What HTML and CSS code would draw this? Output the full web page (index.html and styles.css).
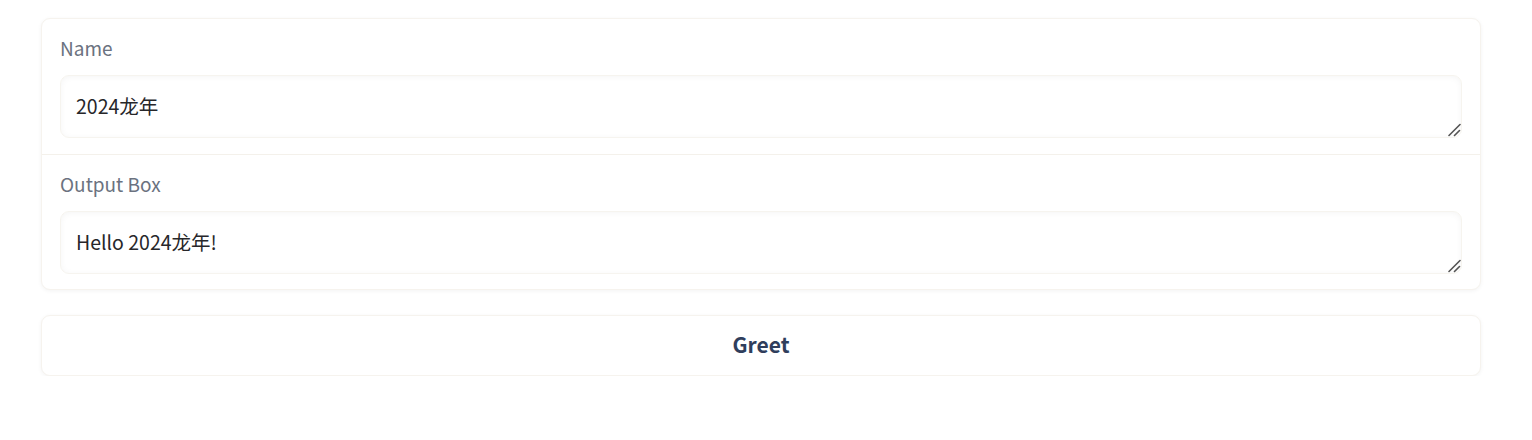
FILE: index.html
```html
<!DOCTYPE html>
<html lang="zh">
<head>
<meta charset="utf-8">
<title>Greet</title>
<link rel="stylesheet" href="styles.css">
</head>
<body>
<main class="page">
  <section class="card">
    <div class="block">
      <label class="label" for="name">Name</label>
      <textarea id="name" class="field" rows="1">2024龙年</textarea>
    </div>
    <div class="block">
      <label class="label" for="out">Output Box</label>
      <textarea id="out" class="field" rows="1">Hello 2024龙年!</textarea>
    </div>
  </section>
  <button class="btn" type="button">Greet</button>
</main>
</body>
</html>
```

FILE: styles.css
```css
* { box-sizing: border-box; }
html, body { margin: 0; background: #fff; }
body {
  font-family: "Noto Sans CJK SC", "Noto Sans", sans-serif;
}
.page {
  width: 1440px;
  margin-left: 41px;
  padding-top: 18px;
  display: flex;
  flex-direction: column;
  gap: 25px;
}
.card {
  border: 1px solid #f6f3ee;
  border-radius: 9px;
  box-shadow: 0 1px 4px rgba(0,0,0,0.05);
  background: #fff;
  display: flex;
  flex-direction: column;
}
.block {
  display: flex;
  flex-direction: column;
  padding: 17px 18px 16px 18px;
  gap: 15px;
}
.block + .block {
  border-top: 1px solid #f4f1eb;
  padding-bottom: 15px;
}
.label {
  font-size: 19px;
  line-height: 24px;
  color: #6b7280;
}
.field {
  display: block;
  width: 100%;
  height: 63px;
  resize: vertical;
  border: 1px solid #f6f4ef;
  border-radius: 9px;
  box-shadow: inset 0 1px 6px rgba(0,0,0,0.045);
  padding: 17px 15px 15px;
  font-family: inherit;
  font-size: 19.5px;
  line-height: 26px;
  color: #27272a;
  background: #fff;
  outline: none;
  overflow: hidden;
}
.field::-webkit-resizer {
  background: url("data:image/svg+xml;utf8,<svg xmlns='http://www.w3.org/2000/svg' width='15' height='15' viewBox='0 0 15 15'><path d='M3 13.5 L14 2.5 M8.5 13.5 L13.5 8.5' stroke='%23555' stroke-width='1.6' stroke-linecap='round' fill='none'/></svg>") no-repeat;
}
.btn {
  height: 61px;
  padding: 0 0 4px;
  border: 1px solid #f6f3ee;
  border-radius: 9px;
  background: #fff;
  box-shadow: 0 1px 4px rgba(0,0,0,0.05);
  font-family: inherit;
  font-size: 21px;
  font-weight: 700;
  color: #2f3e5c;
  cursor: pointer;
}
```
